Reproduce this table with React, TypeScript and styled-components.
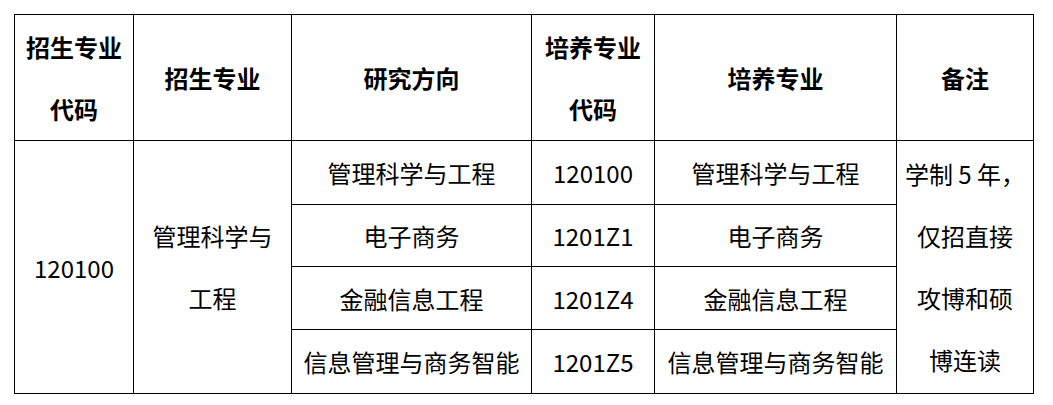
import * as React from "react";
import styled, { createGlobalStyle } from "styled-components";

const GlobalStyle = createGlobalStyle`
  html, body {
    margin: 0;
    padding: 0;
    background: #ffffff;
  }
  body {
    font-family: "Microsoft YaHei", "Noto Sans CJK SC", "Noto Sans", sans-serif;
    color: #000000;
  }
`;

interface IDirection {
  name: string;
  code: string;
  major: string;
}

const directions: IDirection[] = [
  { name: "管理科学与工程", code: "120100", major: "管理科学与工程" },
  { name: "电子商务", code: "1201Z1", major: "电子商务" },
  { name: "金融信息工程", code: "1201Z4", major: "金融信息工程" },
  { name: "信息管理与商务智能", code: "1201Z5", major: "信息管理与商务智能" }
];

const rowHeights = [64, 62, 63, 64];
const colWidths = [119, 158, 240, 123, 242, 137];

export default function App() {
  return (
    <Page>
      <GlobalStyle />
      <Table>
        <colgroup>
          {colWidths.map((w, i) => (
            <col key={i} style={{ width: w }} />
          ))}
        </colgroup>
        <thead>
          <HeadRow>
            <Th>
              <Lines>
                招生专业
                <br />
                代码
              </Lines>
            </Th>
            <Th>招生专业</Th>
            <Th>研究方向</Th>
            <Th>
              <Lines>
                培养专业
                <br />
                代码
              </Lines>
            </Th>
            <Th>培养专业</Th>
            <Th>备注</Th>
          </HeadRow>
        </thead>
        <tbody>
          {directions.map((d, i) => (
            <Row key={d.code} style={{ height: rowHeights[i] }}>
              {i === 0 && (
                <Td rowSpan={directions.length}>120100</Td>
              )}
              {i === 0 && (
                <Td rowSpan={directions.length}>
                  <Lines>
                    管理科学与
                    <br />
                    工程
                  </Lines>
                </Td>
              )}
              <Td>{d.name}</Td>
              <Td>{d.code}</Td>
              <Td>{d.major}</Td>
              {i === 0 && (
                <Td rowSpan={directions.length}>
                  <Lines>
                    学制 5 年，
                    <br />
                    仅招直接
                    <br />
                    攻博和硕
                    <br />
                    博连读
                  </Lines>
                </Td>
              )}
            </Row>
          ))}
        </tbody>
      </Table>
    </Page>
  );
}

const Page = styled.div`
  padding: 14px 0 0 14px;
  width: 1053px;
  height: 405px;
  box-sizing: border-box;
`;

const Table = styled.table`
  border-collapse: collapse;
  table-layout: fixed;
  width: 1020px;
`;

const HeadRow = styled.tr`
  height: 126px;
`;

const Row = styled.tr``;

const Th = styled.th`
  border: 1px solid #000000;
  padding: 0;
  font-size: 24px;
  font-weight: 700;
  text-align: center;
  vertical-align: middle;
  white-space: nowrap;
`;

const Td = styled.td`
  border: 1px solid #000000;
  padding: 0;
  font-size: 24px;
  font-weight: 400;
  text-align: center;
  vertical-align: middle;
  white-space: nowrap;
`;

const Lines = styled.div`
  line-height: 62px;
`;
